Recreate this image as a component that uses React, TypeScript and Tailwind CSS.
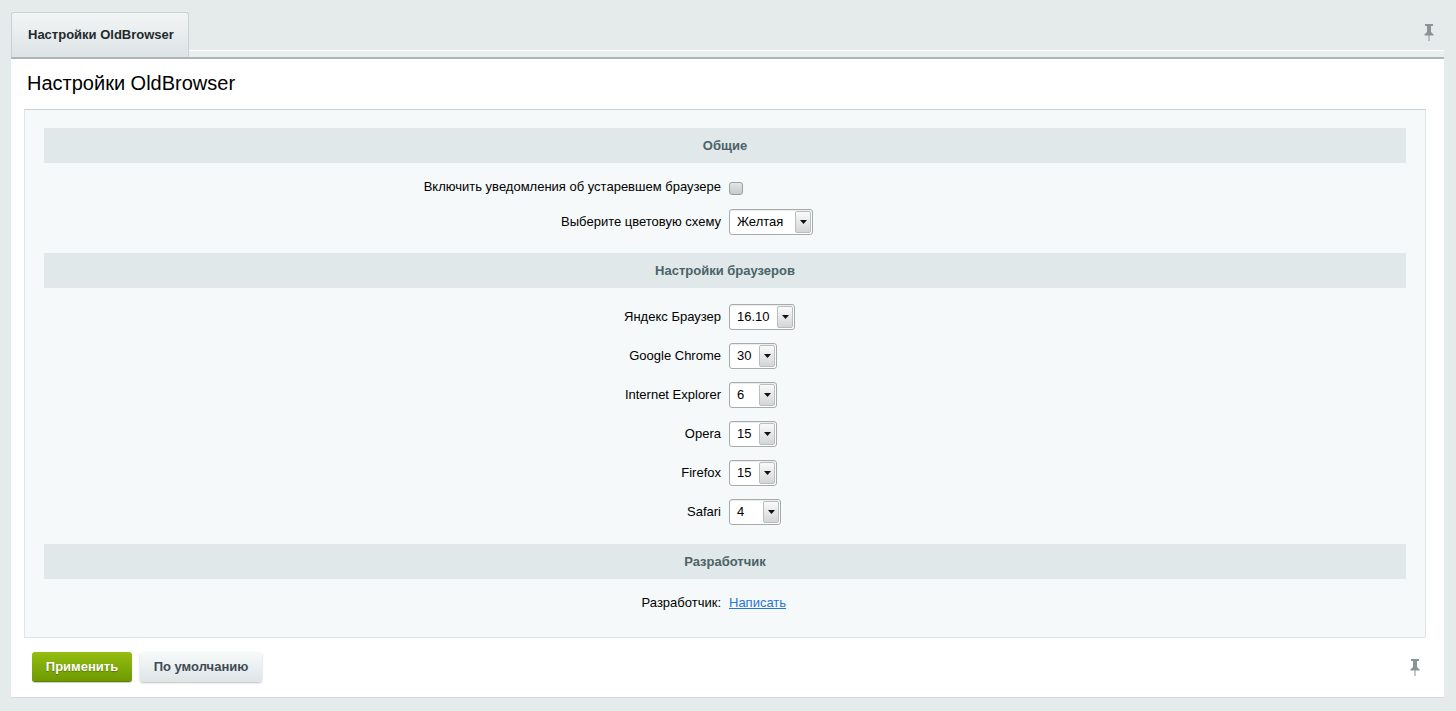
import React from "react";

const font = { fontFamily: '"Liberation Sans", Arial, sans-serif' };

function Pin() {
  return (
    <svg width="10" height="17" viewBox="0 0 10 17">
      <rect x="1" y="0" width="8" height="2" fill="#8b9495" />
      <rect x="3" y="2" width="4" height="6" fill="#8b9495" />
      <path d="M1 10 L3 8 L7 8 L9 10 Z" fill="#8b9495" />
      <rect x="0.5" y="10" width="9" height="1.5" fill="#8b9495" />
      <rect x="4.5" y="11" width="1" height="6" fill="#8b9495" />
    </svg>
  );
}

function Select({ value, width }: { value: string; width: string }) {
  return (
    <div
      className={`${width} h-[26px] flex items-stretch bg-white border border-[#a6abac] rounded-[3px] shadow-[inset_0_1px_1px_rgba(0,0,0,0.08)]`}
    >
      <div className="flex-1 flex items-center pl-[7px] text-[13px] text-black">{value}</div>
      <div className="w-[16px] my-[1px] mr-[1px] border border-[#b9bebf] rounded-[2px] bg-gradient-to-b from-[#fafafa] to-[#d3d6d7] flex items-center justify-center">
        <svg width="7" height="4" viewBox="0 0 7 4">
          <path d="M0 0 L7 0 L3.5 4 Z" fill="#111" />
        </svg>
      </div>
    </div>
  );
}

function Row({ label, children, className = "" }: { label: string; children: React.ReactNode; className?: string }) {
  return (
    <div className={`flex items-center h-[26px] ${className}`}>
      <div className="w-1/2 text-right pr-[4px] text-[13px] text-black">{label}</div>
      <div className="w-1/2 pl-[4px] flex items-center">{children}</div>
    </div>
  );
}

function Header({ title }: { title: string }) {
  return (
    <div className="h-[35px] bg-[#e0e8ea] flex items-center justify-center text-[13px] font-bold text-[#4b6267]">
      {title}
    </div>
  );
}

export default function App() {
  return (
    <div style={font} className="min-h-[711px] w-full bg-[#e5ebeb] pt-[12px] px-[11px] pr-[12px] pb-[14px]">
      {/* tab bar */}
      <div className="flex items-end h-[45px]">
        <div className="w-[178px] h-[45px] rounded-t-[3px] border border-b-0 border-[#c9d1d2] bg-gradient-to-b from-[#f2f5f5] to-[#dde4e5] flex items-center pl-[16px] text-[13px] font-bold text-[#1e2a2c]">
          Настройки OldBrowser
        </div>
        <div className="flex-1 h-full flex flex-col">
          <div className="flex-1 relative">
            <div className="absolute right-[10px] top-[12px]">
              <Pin />
            </div>
          </div>
          <div className="h-[7px] border-t border-white bg-[#e9eeee]" />
        </div>
      </div>
      <div className="h-[2px] bg-[#adb5b6]" />
      {/* panel */}
      <div className="bg-white border-b border-[#d3dadb] pb-[15px]">
        <div className="pl-[16px] pt-[12px] h-[50px] text-[20px] leading-[24px] text-black">Настройки OldBrowser</div>
        <div className="ml-[13px] mr-[18px] bg-[#f5f9f9] border border-[#dfe6e7] border-t-[#c8d1d3] px-[19px] pt-[18px] pb-[21px]">
          <Header title="Общие" />
          <div className="pt-[11px] pb-[18px] flex flex-col gap-[9px]">
            <Row label="Включить уведомления об устаревшем браузере">
              <div className="w-[14px] h-[13px] mt-[2px] rounded-[3px] border border-[#9aa1a2] bg-gradient-to-b from-[#e3e6e7] to-[#c5cacb]" />
            </Row>
            <Row label="Выберите цветовую схему">
              <Select value="Желтая" width="w-[84px]" />
            </Row>
          </div>
          <Header title="Настройки браузеров" />
          <div className="pt-[16px] pb-[19px] flex flex-col gap-[13px]">
            <Row label="Яндекс Браузер">
              <Select value="16.10" width="w-[66px]" />
            </Row>
            <Row label="Google Chrome">
              <Select value="30" width="w-[48px]" />
            </Row>
            <Row label="Internet Explorer">
              <Select value="6" width="w-[48px]" />
            </Row>
            <Row label="Opera">
              <Select value="15" width="w-[48px]" />
            </Row>
            <Row label="Firefox">
              <Select value="15" width="w-[48px]" />
            </Row>
            <Row label="Safari">
              <Select value="4" width="w-[52px]" />
            </Row>
          </div>
          <Header title="Разработчик" />
          <div className="pt-[11px]">
            <Row label="Разработчик:">
              <a href="#" className="text-[13px] text-[#2675d7] underline">
                Написать
              </a>
            </Row>
          </div>
        </div>
        <div className="flex items-center pl-[21px] pr-[24px] pt-[14px]">
          <button className="w-[100px] h-[30px] rounded-[3px] bg-gradient-to-b from-[#94be11] to-[#6e9a02] border-b border-[#5d8300] text-white text-[13px] font-bold [text-shadow:0_1px_1px_rgba(0,0,0,0.3)] shadow-[0_1px_1px_rgba(0,0,0,0.2)]">
            Применить
          </button>
          <button className="ml-[8px] w-[122px] h-[30px] rounded-[3px] bg-gradient-to-b from-[#f8fafa] to-[#dde5e7] text-[#3f4b54] text-[13px] font-bold shadow-[0_1px_2px_rgba(0,0,0,0.25)]">
            По умолчанию
          </button>
          <div className="flex-1" />
          <Pin />
        </div>
      </div>
    </div>
  );
}
